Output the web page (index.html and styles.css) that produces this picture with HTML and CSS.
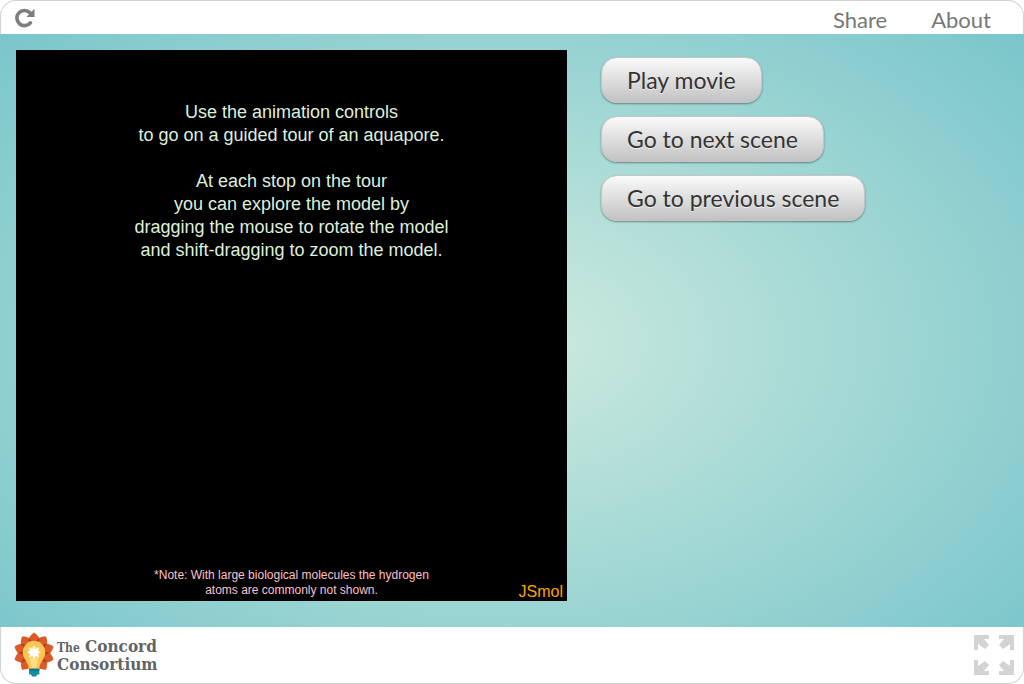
FILE: index.html
```html
<!DOCTYPE html>
<html lang="en">
<head>
<meta charset="utf-8">
<title>Aquapore tour</title>
<link rel="stylesheet" href="styles.css">
</head>
<body>
<div class="app">
  <header class="topbar">
    <button class="icon-button" type="button" aria-label="Reload">
      <svg class="reload-icon" viewBox="0 0 20 20" aria-hidden="true">
        <path d="M15.400 14.800A7.600 7.600 0 1 1 14.800 4.600" fill="none" stroke="#7d7d7d" stroke-width="3.600" stroke-linecap="round"/>
        <path d="M19.500 .8V9H11.300Z" fill="#7d7d7d"/>
      </svg>
    </button>
    <nav class="links">
      <a href="#share">Share</a>
      <a href="#about">About</a>
    </nav>
  </header>
  <main class="content">
    <section class="viewer" aria-label="Molecule viewer">
      <p class="intro">Use the animation controls<br>to go on a guided tour of an aquapore.<br><br>At each stop on the tour<br>you can explore the model by<br>dragging the mouse to rotate the model<br>and shift-dragging to zoom the model.</p>
      <p class="note">*Note: With large biological molecules the hydrogen<br>atoms are commonly not shown.</p>
      <span class="brand">JSmol</span>
    </section>
    <div class="actions">
      <button class="action" type="button">Play movie</button>
      <button class="action" type="button">Go to next scene</button>
      <button class="action" type="button">Go to previous scene</button>
    </div>
  </main>
  <footer class="bottombar">
    <a class="logo" href="#home">
      <svg class="logo-mark" viewBox="0 0 42 46" aria-hidden="true">
        <g fill="#dc5a27">
          <path id="petal" d="M20.500 22C10 15 13 5 20.500 0C28 5 31 15 20.500 22Z"/>
          <use href="#petal" transform="rotate(36 20.500 21)"/>
          <use href="#petal" transform="rotate(72 20.500 21)"/>
          <use href="#petal" transform="rotate(108 20.500 21)"/>
          <use href="#petal" transform="rotate(144 20.500 21)"/>
          <use href="#petal" transform="rotate(216 20.500 21)"/>
          <use href="#petal" transform="rotate(252 20.500 21)"/>
          <use href="#petal" transform="rotate(288 20.500 21)"/>
          <use href="#petal" transform="rotate(324 20.500 21)"/>
        </g>
        <g fill="#b2381f">
          <path id="fold" d="M20.500 21C18 14 18 10 20.500 5C23 10 23 14 20.500 21Z" transform="rotate(18 20.500 21)"/>
          <use href="#fold" transform="rotate(36 20.500 21)"/>
          <use href="#fold" transform="rotate(72 20.500 21)"/>
          <use href="#fold" transform="rotate(108 20.500 21)"/>
          <use href="#fold" transform="rotate(216 20.500 21)"/>
          <use href="#fold" transform="rotate(252 20.500 21)"/>
          <use href="#fold" transform="rotate(288 20.500 21)"/>
          <use href="#fold" transform="rotate(324 20.500 21)"/>
        </g>
        <path d="M15 37C15 30 9 28 9 20a11.500 11.500 0 0 1 23 0C32 28 26 30 26 37Z" fill="#fac552"/>
        <path d="M18 37l-2-12 3 1h3l3-1-2 12Z" fill="#fddc83"/>
        <circle cx="20.500" cy="20" r="6" fill="#fddc83"/>
        <path d="M20.500 13l1.500 4 4-2-2 4 4 1-4 1.500 2 4-4-2-1.500 4-1.500-4-4 2 2-4-4-1.500 4-1-2-4 4 2Z" fill="#fff"/>
        <path d="M15.500 37h10.500v6h-2l-1.500 2h-4l-1-2h-2Z" fill="#188b98"/>
        <path d="M15.500 37h10.500v2h-10.500Z" fill="#10707c"/>
      </svg>
      <span class="logo-text">
        <span class="logo-line"><span class="logo-the">The</span> Concord</span>
        <span class="logo-line">Consortium</span>
      </span>
    </a>
    <button class="icon-button" type="button" aria-label="Fullscreen">
      <svg class="full-icon" viewBox="0 0 42 42" fill="#d1d3d4" aria-hidden="true">
        <path id="arrow" d="M1 1H16V5H11L16 11L12 15L5 10V16H1Z"/>
        <use href="#arrow" transform="matrix(-1 0 0 1 42 0)"/>
        <use href="#arrow" transform="matrix(1 0 0 -1 0 42)"/>
        <use href="#arrow" transform="rotate(180 21 21)"/>
      </svg>
    </button>
  </footer>
</div>
</body>
</html>
```
FILE: styles.css
```css
* { box-sizing: border-box; }

body {
  margin: 0;
  background: #fff;
  font-family: Lato, sans-serif;
}

.app {
  display: flex;
  flex-direction: column;
  min-height: 100vh;
}

.topbar,
.bottombar {
  display: flex;
  align-items: center;
  justify-content: space-between;
  border: 1px solid #d0d2d3;
  background: #fff;
}

.topbar {
  height: 34px;
  padding: 0 32px 0 14px;
  border-bottom: 0;
  border-radius: 16px 16px 0 0;
}

.bottombar {
  height: 57px;
  padding: 0 8px 1px 13px;
  border-top: 0;
  border-radius: 0 0 16px 16px;
}

.icon-button {
  display: block;
  padding: 0;
  border: 0;
  background: none;
  cursor: pointer;
}

.icon-button svg { display: block; }
.reload-icon { width: 20px; height: 20px; }
.full-icon { width: 42px; height: 42px; }

.links {
  display: flex;
  gap: 44px;
  padding-top: 4px;
  font-size: 22px;
  line-height: 26px;
}

.links a {
  color: #777;
  text-decoration: none;
}

.content {
  display: flex;
  flex: 1;
  gap: 34px;
  padding: 16px 16px 26px;
  background: radial-gradient(ellipse farthest-corner at center, #cdeade, #75c4ca) fixed;
}

.viewer {
  display: flex;
  position: relative;
  flex: 0 1 551px;
  flex-direction: column;
  justify-content: space-between;
  padding: 51px 0 3px;
  background: #000;
  font-family: "Liberation Sans", Arial, sans-serif;
  text-align: center;
}

.viewer p { margin: 0; }

.intro {
  color: #dfefdc;
  font-size: 18px;
  line-height: 23px;
}

.note {
  color: #ffc0cb;
  font-size: 12px;
  line-height: 15px;
}

.brand {
  position: absolute;
  right: 4px;
  bottom: 0;
  color: #ffa500;
  font-size: 16px;
  line-height: 18px;
}

.actions {
  display: flex;
  flex-direction: column;
  align-items: flex-start;
  gap: 13px;
  padding-top: 7px;
}

.action {
  height: 46px;
  padding: 0 25px;
  border: 1px solid #c5c5c5;
  border-radius: 16px;
  background: linear-gradient(#fafafa, #c2c2c2);
  box-shadow: 0 1px 2px rgba(0, 0, 0, 0.4);
  color: #333;
  font: 23px/28px Lato, sans-serif;
  text-shadow: 0 1px 0 #eee;
  cursor: pointer;
}

.logo {
  display: flex;
  align-items: center;
  gap: 2px;
  color: #626466;
  text-decoration: none;
}

.logo-mark {
  width: 41px;
  height: 46px;
}

.logo-text {
  display: flex;
  flex-direction: column;
  font: bold 17px/16px "DejaVu Serif Condensed", "DejaVu Serif", serif;
}

.logo-line { white-space: nowrap; }
.logo-the { font-size: 12px; }
```
